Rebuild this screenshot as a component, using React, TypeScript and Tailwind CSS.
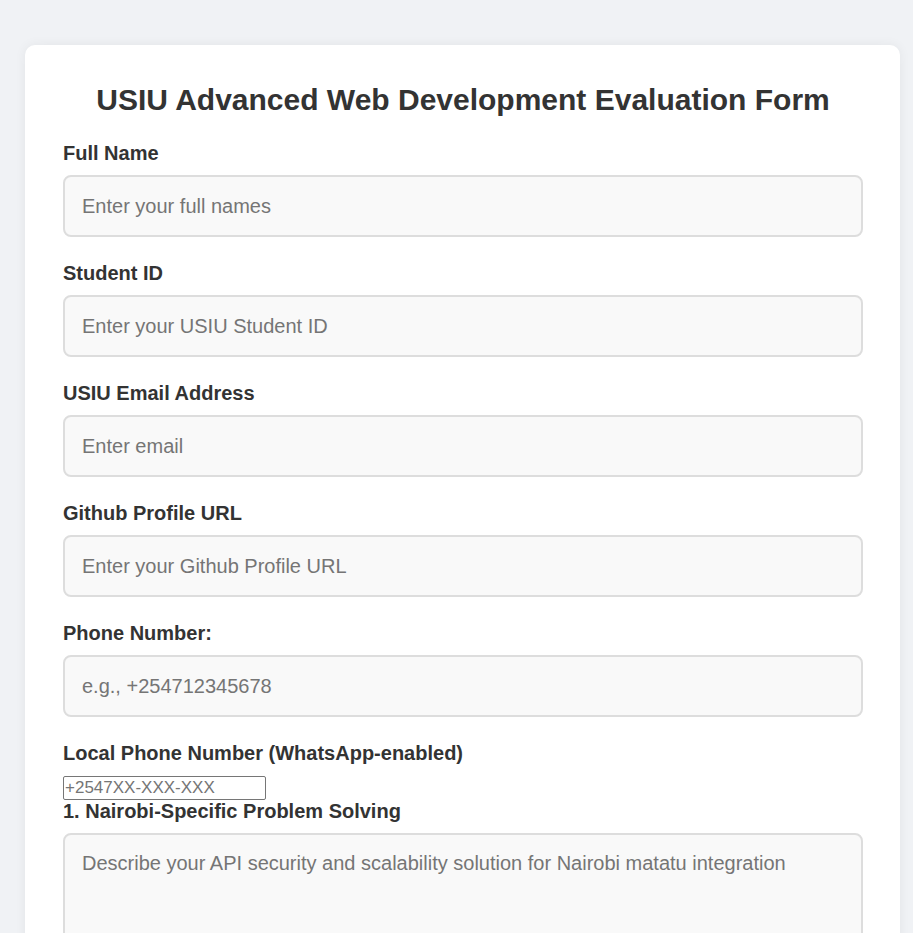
import React from 'react'

const Field = ({ label, placeholder }: { label: string; placeholder: string }) => (
  <div className="mb-[25px]">
    <label className="block text-[20px] leading-[23px] font-bold text-[#333] mb-[10px]">{label}</label>
    <input
      type="text"
      placeholder={placeholder}
      className="block w-full h-[62px] px-[17px] text-[20px] bg-[#f9f9f9] border-2 border-[#ddd] rounded-[8px] text-[#333] placeholder:text-[#757575] outline-none"
    />
  </div>
)

const App = () => {
  const fields = [
    { label: 'Full Name', placeholder: 'Enter your full names' },
    { label: 'Student ID', placeholder: 'Enter your USIU Student ID' },
    { label: 'USIU Email Address', placeholder: 'Enter email' },
    { label: 'Github Profile URL', placeholder: 'Enter your Github Profile URL' },
    { label: 'Phone Number:', placeholder: 'e.g., +254712345678' },
  ]

  return (
    <div className="min-h-[933px] bg-[#f0f2f5] pt-[45px] pl-[25px] font-['Liberation_Sans',Arial,sans-serif]">
      <div className="w-[875px] bg-white rounded-[10px] shadow-[0_0_12px_rgba(0,0,0,0.06)] pl-[38px] pr-[37px] pt-[31px] pb-[40px]">
        <h1 className="text-center text-[30px] leading-[48px] font-bold text-[#333] mb-[18px]">
          USIU Advanced Web Development Evaluation Form
        </h1>
        {fields.map((f, i) => (
          <Field key={i} label={f.label} placeholder={f.placeholder} />
        ))}
        <label className="block text-[20px] leading-[23px] font-bold text-[#333] mb-[11px]">
          Local Phone Number (WhatsApp-enabled)
        </label>
        <input
          type="tel"
          placeholder="+2547XX-XXX-XXX"
          className="block w-[203px] h-[24px] px-[1px] text-[17px] border border-[#767676] rounded-[2px] placeholder:text-[#757575] outline-none"
        />
        <label className="block text-[20px] leading-[23px] font-bold text-[#333] mb-[10px]">
          1. Nairobi-Specific Problem Solving
        </label>
        <textarea
          placeholder="Describe your API security and scalability solution for Nairobi matatu integration"
          className="block w-full h-[160px] px-[17px] py-[17px] text-[20px] leading-[23px] bg-[#f9f9f9] border-2 border-[#ddd] rounded-[8px] placeholder:text-[#757575] outline-none resize-y"
        />
      </div>
    </div>
  )
}

export default App
